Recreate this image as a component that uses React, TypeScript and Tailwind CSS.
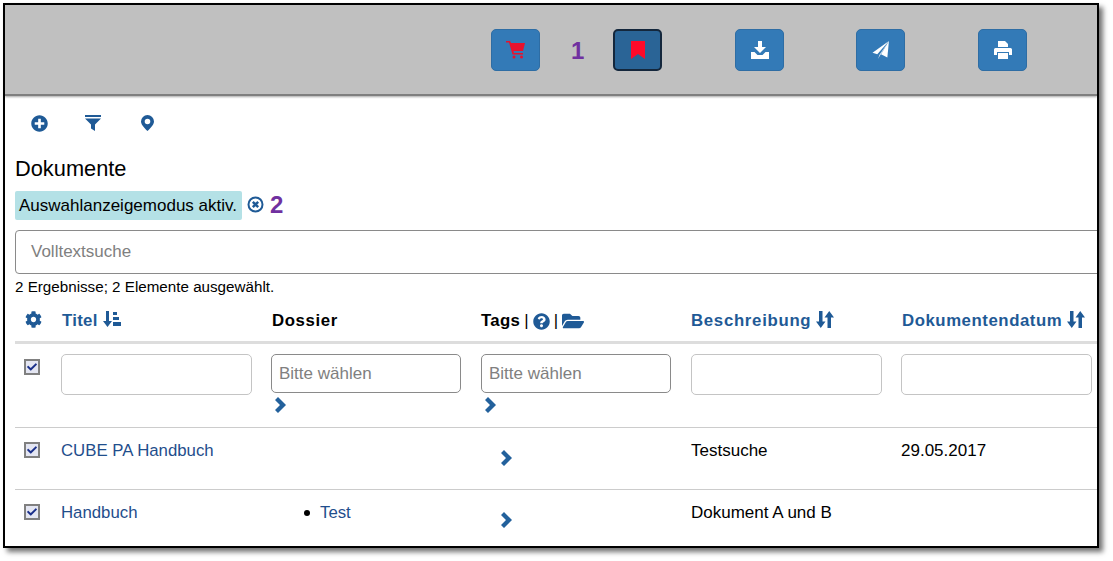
import React from "react";
import { FaCog, FaQuestionCircle, FaFolderOpen, FaCheck, FaPlusCircle } from "react-icons/fa";

const BLUE = "#1f5a96";

const Btn = ({ children, active }: { children: React.ReactNode; active?: boolean }) => (
  <div className={active
    ? "w-[49px] h-[42px] rounded-[5px] bg-[#2a6496] border-2 border-[#14273c] flex items-center justify-center"
    : "w-[49px] h-[42px] rounded-[5px] bg-[#337ab7] border border-[#2e6da4] flex items-center justify-center"}>
    {children}
  </div>
);

const Check = () => (
  <div className="w-[16px] h-[16px] border-2 border-[#808080] bg-[#e4e6f2] flex items-center justify-center">
    <FaCheck className="text-[#1a2f8a] text-[10px]" />
  </div>
);

const Chevron = () => (
  <svg width="12" height="16" viewBox="0 0 12 16" className="block" fill="#23619c">
    <polygon points="0,3 3,0 11,8 3,16 0,13 5,8" />
  </svg>
);

const Sort = () => (
  <svg width="18" height="17" viewBox="0 0 18 17" className="block ml-[5px] -mt-[4px]" fill={BLUE}>
    <polygon points="3,0 6.5,0 6.5,10.5 9.5,10.5 4.75,17 0,10.5 3,10.5" />
    <polygon points="13.25,0 18,6.5 15,6.5 15,17 11.5,17 11.5,6.5 8.5,6.5" />
  </svg>
);

const SortAttr = () => (
  <svg width="18" height="16" viewBox="0 0 18 16" className="block ml-[5px] -mt-[4px]" fill={BLUE}>
    <polygon points="3,0 6,0 6,10 9,10 4.5,16 0,10 3,10" />
    <rect x="10" y="1" width="4" height="3" />
    <rect x="10" y="6" width="6" height="3" />
    <rect x="10" y="11" width="8" height="4" />
  </svg>
);

const Input = ({ ph, strong }: { ph?: string; strong?: boolean }) => (
  <div className={strong
    ? "w-[190px] h-[39px] rounded-[5px] border border-[#8a8a8a] flex items-center px-[7px] text-[#808080] text-[17px]"
    : "w-[191px] h-[41px] rounded-[5px] border border-[#c4c4c4]"}>
    {ph}
  </div>
);

const COLS = "grid grid-cols-[46px_210px_210px_210px_210px_200px] w-[1086px]";

export default function App() {
  return (
    <div className="w-[1113px] h-[561px] bg-white pl-[3px] pt-[3px] overflow-hidden text-[16.8px] text-[#1a1a1a]" style={{ fontFamily: '"Liberation Sans", Arial, sans-serif' }}>
      <div className="w-[1096px] h-[545px] border-2 border-black bg-white overflow-hidden shadow-[4px_4px_5px_rgba(0,0,0,0.55)]">
        <div className="h-[91px] bg-[#c0c0c0] border-b-2 border-[#7f7f7f] shadow-[0_1px_2px_rgba(0,0,0,0.35)] flex items-start pt-[24px] pl-[486px]">
          <Btn>
            <svg width="20" height="18" viewBox="0 0 20 18" fill="#e8112d">
              <path d="M0 0h4l1 2h14l-2 8H7.5l.4 2H17v1.5H6.5L3 1.5H0z" />
              <circle cx="8" cy="16" r="1.5" />
              <circle cx="15.5" cy="16" r="1.5" />
            </svg>
          </Btn>
          <div className="w-[73px] h-[42px] flex items-center pl-[31px] pt-[2px] text-[24px] font-bold text-[#7030a0]">1</div>
          <Btn active>
            <svg width="14" height="18" viewBox="0 0 14 18" fill="#ff0a2a"><polygon points="0,0 14,0 14,18 7,13 0,18" /></svg>
          </Btn>
          <div className="w-[73px]" />
          <Btn>
            <svg width="18" height="18" viewBox="0 0 18 18" fill="#fff">
              <polygon points="7,0 11,0 11,6 15,6 9,12 3,6 7,6" />
              <path d="M0 11h3.5l3 3h5l3-3H18v7H0z" />
            </svg>
          </Btn>
          <div className="w-[72px]" />
          <Btn>
            <svg width="18" height="18" viewBox="0 0 16 17" fill="#fff">
              <polygon points="15.5,0 0,11 4.5,12.5" />
              <polygon points="15.5,0 5,17 6.8,12.8" />
              <polygon points="15.5,0 14,15.5 8,12.5" />
            </svg>
          </Btn>
          <div className="w-[73px]" />
          <Btn>
            <svg width="18" height="18" viewBox="0 0 18 18" fill="#fff">
              <path d="M4 0h7l3 3v3H4z" />
              <path d="M1.5 7h15A1.5 1.5 0 0 1 18 8.5V14h-3v-3H3v3H0V8.5A1.5 1.5 0 0 1 1.5 7z" />
              <rect x="4" y="12" width="10" height="6" />
            </svg>
          </Btn>
        </div>

        <div className="pl-[10px]">
          <div className="flex items-center h-[16px] mt-[19px] pl-[16px]">
            <FaPlusCircle className="text-[17px]" color={BLUE} />
            <svg width="16" height="16" viewBox="0 0 16 16" fill={BLUE} className="ml-[37px]">
              <rect x="0" y="0" width="16" height="2" />
              <polygon points="0,3.5 16,3.5 10,9.5 10,16 6,13.5 6,9.5" />
            </svg>
            <svg width="13" height="16" viewBox="0 0 13 16" fill={BLUE} className="ml-[40px]">
              <path fillRule="evenodd" d="M6.5 0A6.5 6.5 0 0 1 13 6.5C13 10 8.5 14 6.5 16 4.5 14 0 10 0 6.5A6.5 6.5 0 0 1 6.5 0zm0 3.7a2.8 2.8 0 1 0 0 5.6 2.8 2.8 0 0 0 0-5.6z" />
            </svg>
          </div>
          <div className="text-[21.8px] leading-[24px] text-black mt-[26px]">Dokumente</div>
          <div className="flex items-center mt-[10px] h-[29px]">
            <div className="h-[29px] w-[227px] bg-[#b4e1e6] rounded-[2px] flex items-center pl-[4px] text-black text-[17px] whitespace-nowrap">Auswahlanzeigemodus aktiv.</div>
            <svg width="17" height="17" viewBox="0 0 17 17" fill="none" stroke={BLUE} strokeWidth="2" className="ml-[5px] -mt-[2px]">
              <circle cx="8.5" cy="8.5" r="7" />
              <path d="M5.8 5.8l5.4 5.4M11.2 5.8l-5.4 5.4" strokeWidth="2.4" />
            </svg>
            <span className="text-[24px] font-bold text-[#7030a0] ml-[6px] -mt-[2px]">2</span>
          </div>
          <div className="h-[44px] w-[1100px] mt-[10px] border border-[#8a8a8a] rounded-[4px] flex items-center pl-[15px] text-[#808080] text-[17px]">Volltextsuche</div>
          <div className="text-[15.2px] leading-[16px] text-black mt-[5px]">2 Ergebnisse; 2 Elemente ausgewählt.</div>

          <div className={`${COLS} h-[41px] mt-[8px] border-b-[3px] border-[#dddddd] items-center font-bold whitespace-nowrap pb-[2px]`}>
            <div className="pl-[10px]"><FaCog className="text-[17px] -mt-[3px]" color={BLUE} /></div>
            <div className="pl-[1px] flex items-center text-[#1f5a96] tracking-[0.3px]">Titel<SortAttr /></div>
            <div className="text-black pl-[1px] tracking-[0.6px]">Dossier</div>
            <div className="flex items-center text-black tracking-[0.3px]">Tags<span className="font-normal mx-[4px]">|</span><FaQuestionCircle className="text-[17px]" color={BLUE} /><span className="font-normal mx-[4px]">|</span><FaFolderOpen className="text-[22px]" color={BLUE} /></div>
            <div className="flex items-center text-[#1f5a96] tracking-[0.7px]">Beschreibung<Sort /></div>
            <div className="flex items-center text-[#1f5a96] tracking-[0.55px] pl-[1px]">Dokumentendatum<Sort /></div>
          </div>

          <div className={`${COLS} h-[84px] border-b border-[#cccccc] pt-[10px]`}>
            <div className="pl-[9px] pt-[5px]"><Check /></div>
            <Input />
            <div>
              <Input ph="Bitte wählen" strong />
              <div className="ml-[4px] mt-[4px]"><Chevron /></div>
            </div>
            <div>
              <Input ph="Bitte wählen" strong />
              <div className="ml-[4px] mt-[4px]"><Chevron /></div>
            </div>
            <Input />
            <Input />
          </div>

          <div className={`${COLS} h-[62px] border-b border-[#cccccc] pt-[13px] leading-[20px]`}>
            <div className="pl-[9px] pt-[1px]"><Check /></div>
            <div className="text-[#1f4e8c]">CUBE PA Handbuch</div>
            <div />
            <div className="pl-[20px] pt-[9px]"><Chevron /></div>
            <div className="text-black text-[17px]">Testsuche</div>
            <div className="text-black text-[17px]">29.05.2017</div>
          </div>

          <div className={`${COLS} pt-[13px] leading-[20px]`}>
            <div className="pl-[9px] pt-[1px]"><Check /></div>
            <div className="text-[#1f4e8c]">Handbuch</div>
            <div className="flex items-center h-[20px] pl-[33px] text-[#1f4e8c]"><span className="w-[6px] h-[6px] rounded-full bg-black mr-[10px]" />Test</div>
            <div className="pl-[20px] pt-[9px]"><Chevron /></div>
            <div className="text-black text-[17px]">Dokument A und B</div>
            <div />
          </div>
        </div>
      </div>
    </div>
  );
}
